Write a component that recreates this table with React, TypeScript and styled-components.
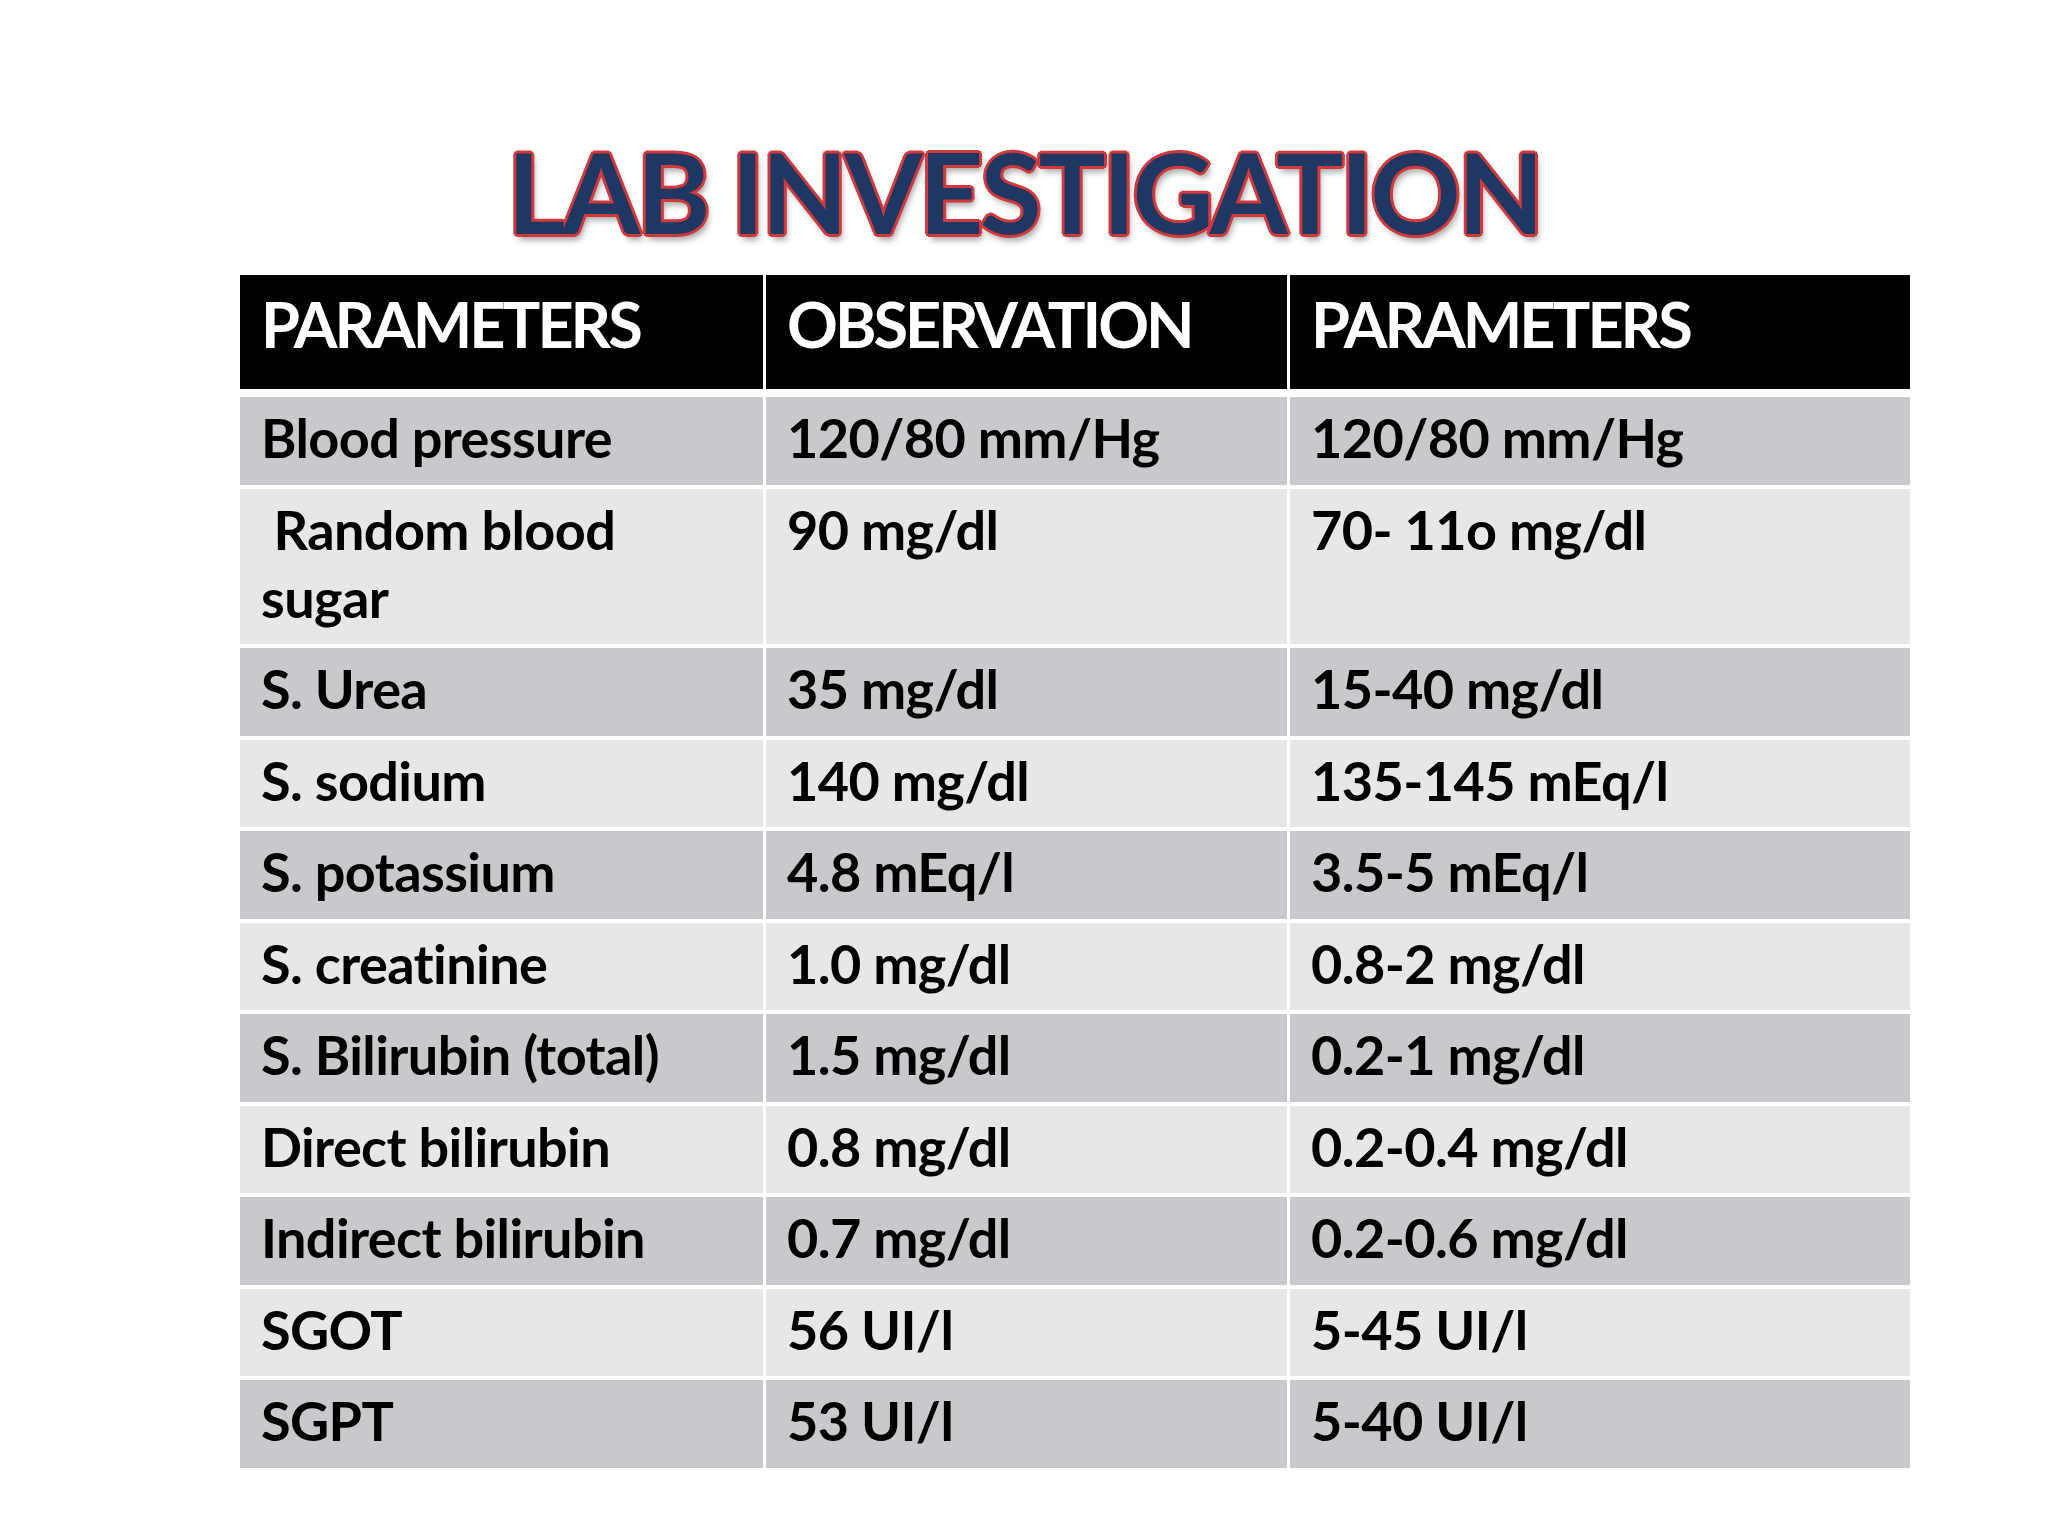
import React from 'react';
import styled, { createGlobalStyle } from 'styled-components';

const GlobalStyle = createGlobalStyle`
  html, body {
    margin: 0;
    padding: 0;
    background: #ffffff;
  }
  body {
    font-family: Lato, "Open Sans", sans-serif;
  }
`;

const Slide = styled.main`
  width: 2048px;
  height: 1536px;
  box-sizing: border-box;
  padding-top: 135px;
  background: #ffffff;
`;

const Title = styled.h1`
  margin: 0 0 28px 0;
  text-align: center;
  font-family: Lato, "Open Sans", sans-serif;
  font-weight: 700;
  font-size: 112px;
  line-height: 1;
  letter-spacing: -3.2px;
  color: #1f3763;
  text-shadow:
    3px 0 0 #d2393c, -3px 0 0 #d2393c, 0 3px 0 #d2393c, 0 -3px 0 #d2393c,
    2px 2px 0 #d2393c, -2px 2px 0 #d2393c, 2px -2px 0 #d2393c, -2px -2px 0 #d2393c,
    3px 6px 6px rgba(0, 0, 0, 0.35);
`;

const Table = styled.section`
  margin-left: 240px;
  width: 1670px;
  display: grid;
  grid-template-columns: 523px 521px 620px;
  column-gap: 3px;
  row-gap: 4px;
`;

const HeadCell = styled.div`
  background: #000000;
  color: #ffffff;
  height: 114px;
  box-sizing: border-box;
  padding: 10px 20px 0 21px;
  margin-bottom: 4px;
  font-size: 63px;
  font-weight: 700;
  line-height: 77px;
  letter-spacing: -3px;
`;

const Cell = styled.div<{ $dark: boolean }>`
  background: ${p => (p.$dark ? '#c9c8cc' : '#e7e6e9')};
  color: #000000;
  box-sizing: border-box;
  min-height: 87.5px;
  padding: 7px 20px 12.5px 21px;
  font-size: 54px;
  font-weight: 700;
  line-height: 68px;
  letter-spacing: -0.6px;
  white-space: pre-line;
`;

const headers = ['PARAMETERS', 'OBSERVATION', 'PARAMETERS'];

const rows: string[][] = [
  ['Blood pressure', '120/80 mm/Hg', '120/80 mm/Hg'],
  ['\u00a0Random blood\nsugar', '90 mg/dl', '70- 11o mg/dl'],
  ['S. Urea', '35 mg/dl', '15-40 mg/dl'],
  ['S. sodium', '140 mg/dl', '135-145 mEq/l'],
  ['S. potassium', '4.8 mEq/l', '3.5-5 mEq/l'],
  ['S. creatinine', '1.0 mg/dl', '0.8-2 mg/dl'],
  ['S. Bilirubin (total)', '1.5 mg/dl', '0.2-1 mg/dl'],
  ['Direct bilirubin', '0.8 mg/dl', '0.2-0.4 mg/dl'],
  ['Indirect bilirubin', '0.7 mg/dl', '0.2-0.6 mg/dl'],
  ['SGOT', '56 UI/l', '5-45 UI/l'],
  ['SGPT', '53 UI/l', '5-40 UI/l'],
];

export default function App() {
  return (
    <>
      <GlobalStyle />
      <Slide>
        <Title>LAB INVESTIGATION</Title>
        <Table>
          {headers.map((h, i) => (
            <HeadCell key={'h' + i}>{h}</HeadCell>
          ))}
          {rows.map((row, r) =>
            row.map((text, c) => (
              <Cell key={r + '-' + c} $dark={r % 2 === 0}>
                {text}
              </Cell>
            ))
          )}
        </Table>
      </Slide>
    </>
  );
}
